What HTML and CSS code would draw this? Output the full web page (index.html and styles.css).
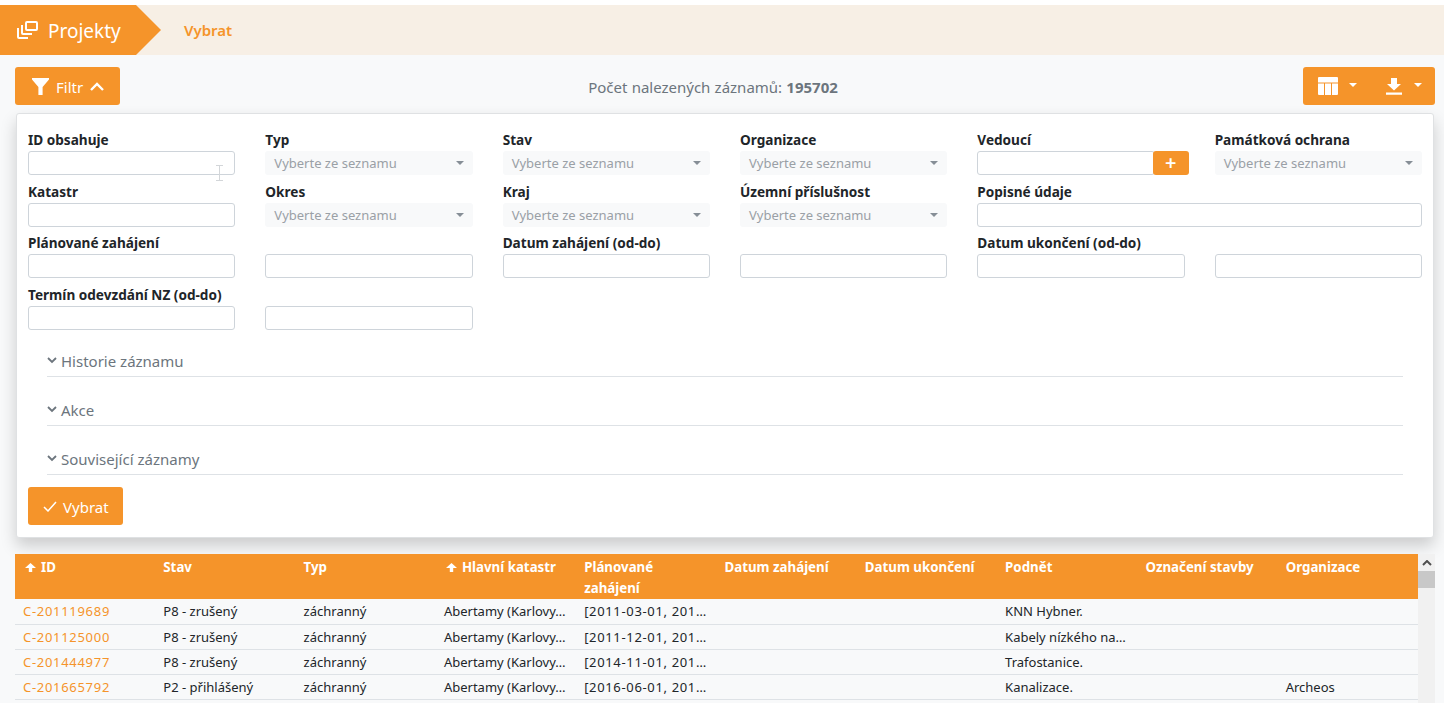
FILE: index.html
```html
<!DOCTYPE html>
<html lang="cs">
<head>
<meta charset="utf-8">
<title>Projekty</title>
<link rel="stylesheet" href="styles.css">
</head>
<body>
<nav class="crumbs">
  <div class="crumb-main">
    <svg class="crumb-icon" viewBox="0 0 21 18" width="21" height="18" fill="none" stroke="#fff" stroke-width="2"><rect x="9" y="1" width="11" height="8" rx="1"/><path d="M5 4v8a1 1 0 0 0 1 1h9"/><path d="M1 7v9a1 1 0 0 0 1 1h9"/></svg>
    <span>Projekty</span>
  </div>
  <div class="crumb-arrow"></div>
  <a class="crumb-sub">Vybrat</a>
</nav>
<div class="toolbar">
  <button class="btn btn-filter">
    <svg viewBox="0 0 17 17" width="17" height="17" fill="#fff"><path d="M0 0h17v1.600L10.600 9v8H6.400V9L0 1.600z"/></svg>
    <span>Filtr</span>
    <svg viewBox="0 0 14 9" width="14" height="9" fill="none" stroke="#fff" stroke-width="2.400"><path d="M1 8l6-6 6 6"/></svg>
  </button>
  <div class="count">Počet nalezených záznamů: <b>195702</b></div>
  <div class="btn-group">
    <button class="btn btn-icon">
      <svg viewBox="0 0 20 18" width="20" height="18" fill="#fff"><path d="M1 0h18a1 1 0 0 1 1 1v4.500H0V1a1 1 0 0 1 1-1zM0 6.500h6V18H1a1 1 0 0 1-1-1zM7 6.500h6V18H7zM14 6.500h6V17a1 1 0 0 1-1 1h-5z"/></svg>
      <i class="caret"></i>
    </button>
    <button class="btn btn-icon">
      <svg viewBox="0 0 16 17" width="16" height="17" fill="#fff"><path d="M5 0h6v6h4l-7 6.500L1 6h4zM0 14.500h16v2.300H0z"/></svg>
      <i class="caret"></i>
    </button>
  </div>
</div>
<section class="card">
  <div class="form-grid">
    <div class="field field-cursor"><label>ID obsahuje</label><input class="inp" type="text">
      <svg class="ibeam" viewBox="0 0 7 16" width="7" height="16" fill="none" stroke="#d3d6d9" stroke-width="1"><path d="M0 .5h7M3.500 .5v15M0 15.500h7"/></svg>
    </div>
    <div class="field"><label>Typ</label><div class="sel">Vyberte ze seznamu</div></div>
    <div class="field"><label>Stav</label><div class="sel">Vyberte ze seznamu</div></div>
    <div class="field"><label>Organizace</label><div class="sel">Vyberte ze seznamu</div></div>
    <div class="field"><label>Vedoucí</label><div class="inp-add"><input class="inp" type="text"><button class="btn-plus">+</button></div></div>
    <div class="field"><label>Památková ochrana</label><div class="sel">Vyberte ze seznamu</div></div>

    <div class="field"><label>Katastr</label><input class="inp" type="text"></div>
    <div class="field"><label>Okres</label><div class="sel">Vyberte ze seznamu</div></div>
    <div class="field"><label>Kraj</label><div class="sel">Vyberte ze seznamu</div></div>
    <div class="field"><label>Územní příslušnost</label><div class="sel">Vyberte ze seznamu</div></div>
    <div class="field span2"><label>Popisné údaje</label><input class="inp" type="text"></div>

    <div class="field"><label>Plánované zahájení</label><input class="inp" type="text"></div>
    <div class="field"><label>&nbsp;</label><input class="inp" type="text"></div>
    <div class="field"><label>Datum zahájení (od-do)</label><input class="inp" type="text"></div>
    <div class="field"><label>&nbsp;</label><input class="inp" type="text"></div>
    <div class="field"><label>Datum ukončení (od-do)</label><input class="inp" type="text"></div>
    <div class="field"><label>&nbsp;</label><input class="inp" type="text"></div>

    <div class="field"><label>Termín odevzdání NZ (od-do)</label><input class="inp" type="text"></div>
    <div class="field"><label>&nbsp;</label><input class="inp" type="text"></div>
  </div>
  <div class="acc">
    <div class="acc-item"><svg viewBox="0 0 10 7" width="10" height="7" fill="none" stroke="#6c757d" stroke-width="1.800"><path d="M1 1l4 4 4-4"/></svg>Historie záznamu</div>
    <div class="acc-item"><svg viewBox="0 0 10 7" width="10" height="7" fill="none" stroke="#6c757d" stroke-width="1.800"><path d="M1 1l4 4 4-4"/></svg>Akce</div>
    <div class="acc-item"><svg viewBox="0 0 10 7" width="10" height="7" fill="none" stroke="#6c757d" stroke-width="1.800"><path d="M1 1l4 4 4-4"/></svg>Související záznamy</div>
  </div>
  <button class="btn btn-submit">
    <svg viewBox="0 0 14 11" width="14" height="11" fill="none" stroke="#fff" stroke-width="1.500"><path d="M1 6l4 4 8-9"/></svg>
    <span>Vybrat</span>
  </button>
</section>
<div class="table-wrap">
  <table class="data">
    <thead>
      <tr>
        <th><svg class="arr" viewBox="0 0 11 9" width="11" height="9" fill="#fff"><path d="M5.500 0L11 5H7.200v4H3.800V5H0z"/></svg>ID</th><th>Stav</th><th>Typ</th><th><svg class="arr" viewBox="0 0 11 9" width="11" height="9" fill="#fff"><path d="M5.500 0L11 5H7.200v4H3.800V5H0z"/></svg>Hlavní katastr</th><th>Plánované zahájení</th><th>Datum zahájení</th><th>Datum ukončení</th><th>Podnět</th><th>Označení stavby</th><th>Organizace</th>
      </tr>
    </thead>
    <tbody>
      <tr><td><a>C-201119689</a></td><td>P8 - zrušený</td><td>záchranný</td><td>Abertamy (Karlovy…</td><td class="num">[2011-03-01, 201…</td><td></td><td></td><td>KNN Hybner.</td><td></td><td></td></tr>
      <tr><td><a>C-201125000</a></td><td>P8 - zrušený</td><td>záchranný</td><td>Abertamy (Karlovy…</td><td class="num">[2011-12-01, 201…</td><td></td><td></td><td>Kabely nízkého na…</td><td></td><td></td></tr>
      <tr><td><a>C-201444977</a></td><td>P8 - zrušený</td><td>záchranný</td><td>Abertamy (Karlovy…</td><td class="num">[2014-11-01, 201…</td><td></td><td></td><td>Trafostanice.</td><td></td><td></td></tr>
      <tr><td><a>C-201665792</a></td><td>P2 - přihlášený</td><td>záchranný</td><td>Abertamy (Karlovy…</td><td class="num">[2016-06-01, 201…</td><td></td><td></td><td>Kanalizace.</td><td></td><td>Archeos</td></tr>
    </tbody>
  </table>
  <div class="scrollbar">
    <svg viewBox="0 0 10 6" width="10" height="6" fill="none" stroke="#505050" stroke-width="2"><path d="M1 5l4-4 4 4"/></svg>
    <div class="thumb"></div>
  </div>
</div>
</body>
</html>
```
FILE: styles.css
```css
* { box-sizing: border-box; }
html { background: #fff; }
html, body { height: 100%; }
body {
  margin: 0;
  padding-top: 5px;
  overflow: hidden;
  background: linear-gradient(#fff 5px, #f8f9fa 5px);
  font-family: "Noto Sans", "Open Sans", sans-serif;
  font-size: 13px;
  color: #212529;
}
.crumbs {
  height: 50px;
  display: flex;
  align-items: center;
  background: #f7efe5;
}
.crumb-main {
  height: 50px;
  width: 136px;
  display: flex;
  align-items: center;
  gap: 10px;
  padding-left: 17px;
  background: #f5942a;
  color: #fff;
  font-size: 19px;
}
.crumb-main span { padding-top: 2px; }
.crumb-icon { flex: none; }
.crumb-arrow {
  width: 0;
  height: 0;
  border-top: 25px solid transparent;
  border-bottom: 25px solid transparent;
  border-left: 25px solid #f5942a;
}
.crumb-sub {
  margin-left: 23px;
  color: #f5942a;
  font-size: 15px;
  font-weight: 600;
}
.toolbar {
  display: flex;
  align-items: center;
  justify-content: space-between;
  margin: 12px 9px 0 15px;
  height: 38px;
}
.count {
  flex: 1;
  text-align: center;
  font-size: 15px;
  color: #6c757d;
  padding: 2px 0 0 3px;
  word-spacing: .3px;
}
.count b { font-weight: 700; }
.btn {
  border: 0;
  border-radius: 3px;
  background: #f5942a;
  color: #fff;
  font: inherit;
  font-size: 15px;
  display: flex;
  align-items: center;
}
.btn-filter {
  width: 105px;
  height: 38px;
  padding: 0 0 0 17px;
  gap: 7px;
}
.btn-filter span { padding-top: 2px; }
.btn-group {
  display: flex;
  width: 132px;
  height: 38px;
  background: #f5942a;
  border-radius: 3px;
}
.btn-icon {
  width: 66px;
  height: 38px;
  padding: 0 0 0 15px;
  gap: 11px;
  background: none;
}
.btn-icon + .btn-icon { padding-left: 17px; gap: 12px; }
.caret {
  width: 0;
  height: 0;
  border-left: 4px solid transparent;
  border-right: 4px solid transparent;
  border-top: 4px solid #fff;
  margin-top: -3px;
}
.card {
  margin: 8px 10px 0 16px;
  height: 425px;
  padding: 13px 11px 0 11px;
  background: #fff;
  border: 1px solid #dfe1e3;
  border-radius: 3px;
  box-shadow: 0 8px 16px rgba(0,0,0,.18);
}
.form-grid {
  display: grid;
  grid-template-columns: repeat(6, 1fr);
  column-gap: 30px;
}
.field { height: 51.6px; }
.field-cursor { position: relative; }
.ibeam { position: absolute; left: 188px; top: 38px; }
.span2 { grid-column: span 2; }
.field label {
  display: block;
  height: 24px;
  line-height: 26px;
  font-size: 13.6px;
  font-weight: 700;
  color: #212529;
  white-space: nowrap;
}
.inp {
  display: block;
  width: 100%;
  height: 24px;
  border: 1px solid #ced4da;
  border-radius: 3px;
  background: #fff;
  padding: 0 8px;
  outline: 0;
}
.sel {
  height: 24px;
  line-height: 24px;
  padding-left: 9px;
  background: #f8f9fa;
  border-radius: 3px;
  color: #9aa0a6;
  position: relative;
}
.sel::after {
  content: "";
  position: absolute;
  right: 9px;
  top: 10px;
  border-left: 4px solid transparent;
  border-right: 4px solid transparent;
  border-top: 4px solid #868e96;
}
.inp-add { display: flex; margin-right: -4px; }
.inp-add .inp { flex: 1; min-width: 0; }
.btn-plus {
  flex: none;
  width: 36px;
  height: 24px;
  margin-left: -2px;
  padding: 0;
  border: 0;
  border-radius: 3px;
  background: #f5942a;
  color: #fff;
  font: inherit;
  font-size: 20px;
  line-height: 22px;
  font-weight: 600;
}
.acc { margin: 1px 19px 0; }
.acc-item {
  height: 43px;
  display: flex;
  align-items: flex-end;
  gap: 4px;
  padding-bottom: 5px;
  border-bottom: 1px solid #dee2e6;
  font-size: 15px;
  color: #6c757d;
}
.acc-item + .acc-item { margin-top: 6px; }
.acc-item svg { margin-bottom: 7px; }
.btn-submit {
  margin-top: 12px;
  width: 95px;
  height: 38px;
  padding: 0 0 0 15px;
  gap: 6px;
}
.btn-submit span { padding-top: 1px; }
.table-wrap {
  margin: 16px 9px 0 15px;
  display: flex;
  height: 149px;
  overflow: hidden;
  position: relative;
}
.data {
  flex: 1;
  width: 1403px;
  table-layout: fixed;
  border-collapse: collapse;
  align-self: flex-start;
}
.data th {
  height: 45px;
  padding: 3px 8px 0 8px;
  background: #f5942a;
  color: #fff;
  font-size: 13.3px;
  font-weight: 700;
  line-height: 21px;
  text-align: left;
  vertical-align: top;
}
.arr { margin: 0 5px 0 2px; }
.data td {
  height: 25.2px;
  padding: 0 8px;
  border-bottom: 1px solid #dee2e6;
  font-size: 13px;
  color: #212529;
  white-space: nowrap;
  overflow: hidden;
}
.data td.num { letter-spacing: .65px; }
.data a { color: #f5942a; letter-spacing: .7px; }
.scrollbar {
  width: 17px;
  background: #f1f1f1;
  flex: none;
  display: flex;
  flex-direction: column;
  align-items: center;
  padding-top: 6px;
}
.scrollbar svg { flex: none; }
.thumb {
  width: 100%;
  height: 17px;
  flex: none;
  margin-top: 5px;
  background: #c8c8c8;
}
```
